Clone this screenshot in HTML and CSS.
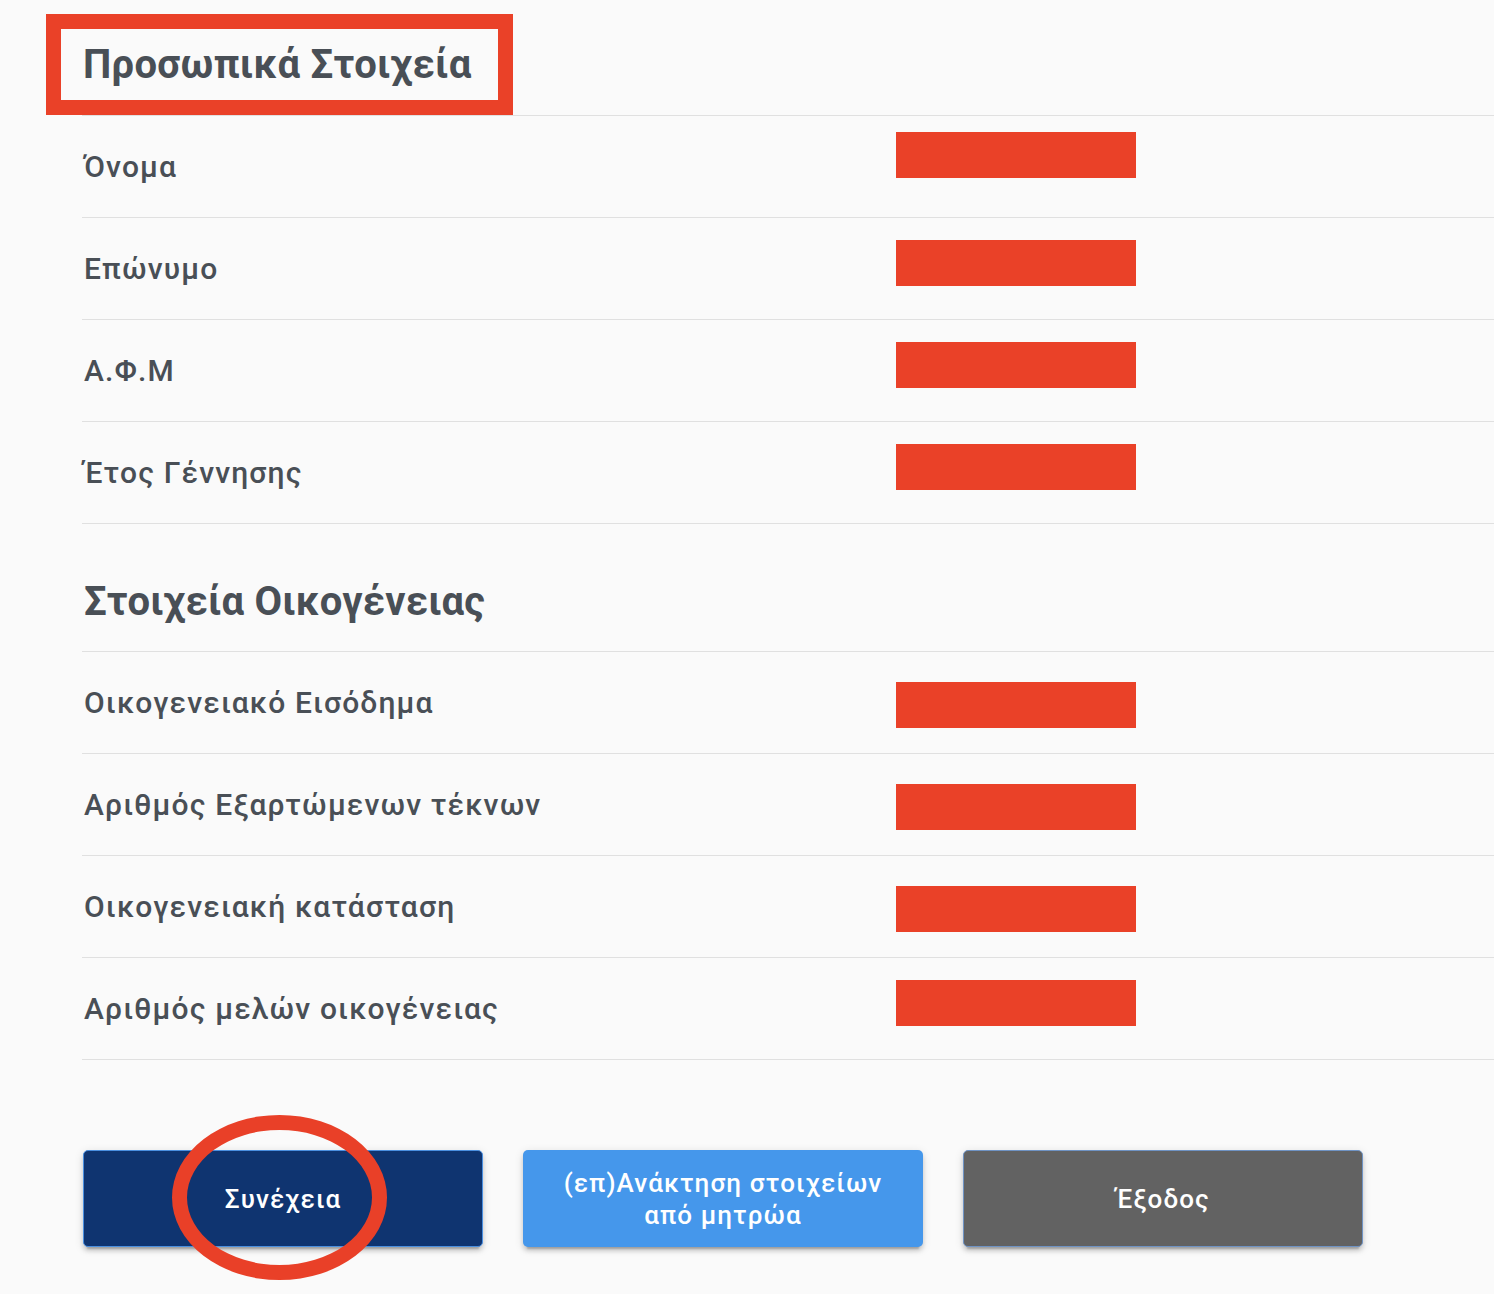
FILE: index.html
```html
<!DOCTYPE html>
<html lang="el">
<head>
<meta charset="utf-8">
<title>Προσωπικά Στοιχεία</title>
<link rel="stylesheet" href="styles.css">
</head>
<body>
<main class="page">
  <section class="section">
    <div class="head-1">
      <h2 class="title title-boxed">Προσωπικά Στοιχεία</h2>
    </div>
    <ul class="list">
      <li class="row"><span class="label">Όνομα</span><span class="redact off-16"></span></li>
      <li class="row"><span class="label">Επώνυμο</span><span class="redact off-22"></span></li>
      <li class="row"><span class="label">Α.Φ.Μ</span><span class="redact off-22"></span></li>
      <li class="row"><span class="label">Έτος Γέννησης</span><span class="redact off-22"></span></li>
    </ul>
  </section>
  <section class="section">
    <div class="head-2">
      <h2 class="title">Στοιχεία Οικογένειας</h2>
    </div>
    <ul class="list">
      <li class="row"><span class="label">Οικογενειακό Εισόδημα</span><span class="redact off-30"></span></li>
      <li class="row"><span class="label">Αριθμός Εξαρτώμενων τέκνων</span><span class="redact off-30"></span></li>
      <li class="row"><span class="label">Οικογενειακή κατάσταση</span><span class="redact off-30"></span></li>
      <li class="row"><span class="label">Αριθμός μελών οικογένειας</span><span class="redact off-22"></span></li>
    </ul>
  </section>
  <div class="actions">
    <button class="btn btn-primary" type="button">Συνέχεια<span class="circle"></span></button>
    <button class="btn btn-info" type="button">(επ)Ανάκτηση στοιχείων<br>από μητρώα</button>
    <button class="btn btn-grey" type="button">Έξοδος</button>
  </div>
</main>
</body>
</html>
```

FILE: styles.css
```css
html, body {
  margin: 0;
  padding: 0;
  background: #fafafa;
}

body {
  font-family: Roboto, "Noto Sans", "Liberation Sans", sans-serif;
  color: #494f56;
  width: 1494px;
  height: 1294px;
  overflow: hidden;
}

.page {
  padding-left: 82px;
}

.title {
  margin: 0;
  padding-left: 2px;
  font-size: 40px;
  font-weight: 700;
  letter-spacing: 0.3px;
  color: #494f56;
}

.head-1 {
  height: 115px;
  box-sizing: border-box;
  padding-top: 14px;
}

.title-boxed {
  display: inline-block;
  box-sizing: border-box;
  margin-left: -36px;
  height: 101px;
  line-height: 71px;
  border: 15px solid #ea4128;
  padding: 0 26px 0 22px;
}

.head-2 {
  height: 127px;
  box-sizing: border-box;
  padding-top: 54px;
}

.head-2 .title {
  line-height: 48px;
  letter-spacing: 0.2px;
}

.list {
  list-style: none;
  margin: 0;
  padding: 0;
  border-top: 1px solid #e0e0e0;
}

.row {
  display: flex;
  align-items: center;
  height: 101px;
  border-bottom: 1px solid #e0e0e0;
}

.label {
  flex: 0 0 812px;
  padding-left: 2px;
  padding-bottom: 1px;
  font-size: 30px;
  font-weight: 500;
  letter-spacing: 1.15px;
}

.redact {
  align-self: flex-start;
  width: 240px;
  height: 46px;
  background: #ea4128;
}

.off-16 { margin-top: 16px; }
.off-22 { margin-top: 22px; }
.off-30 { margin-top: 30px; }

.actions {
  display: flex;
  gap: 40px;
  margin-top: 90px;
  padding-left: 1px;
}

.btn {
  position: relative;
  width: 400px;
  height: 97px;
  border-radius: 5px;
  border: 1px solid transparent;
  font-family: Roboto, "Noto Sans", "Liberation Sans", sans-serif;
  font-size: 26px;
  font-weight: 500;
  letter-spacing: 1.1px;
  line-height: 32px;
  color: #ffffff;
  text-align: center;
  box-shadow: 0 6px 2px -4px rgba(0,0,0,.2), 0 4px 4px 0 rgba(0,0,0,.14), 0 2px 10px 0 rgba(0,0,0,.12);
  padding: 0;
}

.btn-primary {
  background: #0f3470;
  border-color: #4a8fe0;
}

.btn-info {
  background: #4597eb;
}

.btn-grey {
  background: #626262;
  border-color: #6f93c4;
}

.circle {
  position: absolute;
  left: 88px;
  top: -36px;
  width: 215px;
  height: 165px;
  box-sizing: border-box;
  border: 15px solid #e94028;
  border-radius: 50%;
  pointer-events: none;
}
```
